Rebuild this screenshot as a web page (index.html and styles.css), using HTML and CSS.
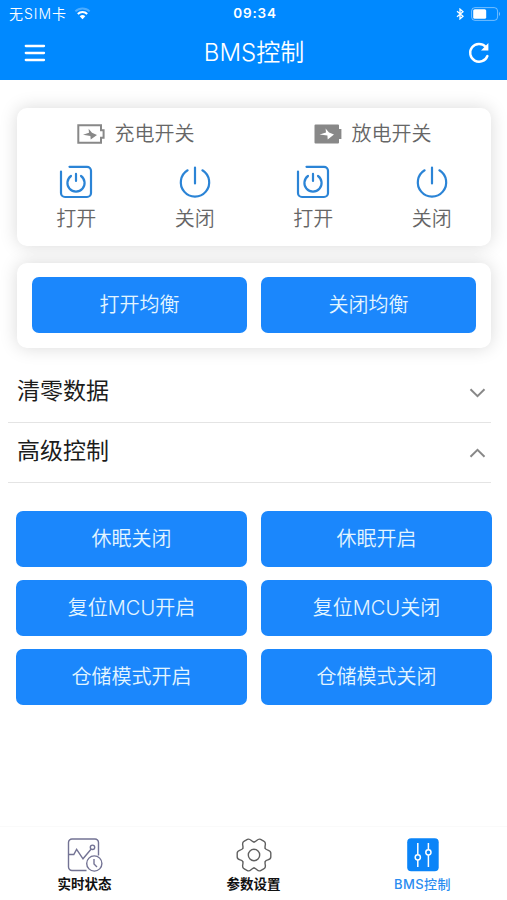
FILE: index.html
```html
<!DOCTYPE html>
<html lang="zh-CN">
  <head>
    <meta charset="UTF-8" />
    <meta name="viewport" content="width=device-width, initial-scale=1.0" />
    <title>BMS控制</title>
    <link rel="stylesheet" href="styles.css">
  </head>
  <body>
    <!-- shared icons -->
    <svg class="sprite">
      <symbol id="icon-open" viewBox="0 0 34 34">
        <path d="M10.5 1.800H28a4 4 0 0 1 4 4V28a4 4 0 0 1-4 4H6a4 4 0 0 1-4-4V6.500M12 11a8.600 8.600 0 1 0 10 0M17 8.800v7.200" />
      </symbol>
      <symbol id="icon-close" viewBox="0 0 34 34">
        <path d="M9.6 5.3a14.2 14.2 0 1 0 14.8 0M17 2.5v16" />
      </symbol>
      <symbol id="gear-tooth" viewBox="0 0 36 34">
        <path d="M29.3 10.500C30.500 12.600 34.800 11.600 34.800 15V19C34.800 22.400 30.500 21.400 29.300 23.500" />
      </symbol>
    </svg>

    <header class="header">
      <div class="status">
        <div class="status-left">
          <span>无SIM卡</span>
          <svg width="17" height="13" viewBox="0 0 17 13" fill="none" stroke="#fff" stroke-width="2">
            <path d="M1.4 4.4a10 10 0 0 1 14.2 0" opacity=".3" />
            <path d="M3.8 7a6.7 6.7 0 0 1 9.4 0" />
            <path d="M5.7 9.3a4 4 0 0 1 5.6 0L8.5 12.3z" fill="#fff" stroke="none" />
          </svg>
        </div>
        <span class="time">09:34</span>
        <div class="status-right">
          <svg width="8" height="12" viewBox="0 0 8 12" fill="none" stroke="#fff" stroke-width="1.3">
            <path d="M1 3.3l6 5-3 2.6V1.1l3 2.6-6 5" />
          </svg>
          <svg width="30" height="14" viewBox="0 0 30 14">
            <rect x=".6" y=".6" width="26" height="12.8" rx="3.4" fill="none" stroke="#fff" stroke-opacity=".45" />
            <rect x="2.2" y="2.2" width="13" height="9.6" rx="1.6" fill="#fff" />
            <path d="M28 4.8q2 2.2 0 4.4z" fill="#fff" opacity=".5" />
          </svg>
        </div>
      </div>
      <div class="navbar">
        <svg width="22" height="18" viewBox="0 0 22 18" stroke="#fff" stroke-width="2.3" stroke-linecap="round">
          <path d="M1.8 2H20M1.8 9H20M1.8 16H20" />
        </svg>
        <h1>BMS控制</h1>
        <svg width="22" height="22" viewBox="0 0 22 22" fill="none" stroke="#fff" stroke-width="2.4">
          <path d="M17.600 4.800A8.900 8.900 0 1 0 19.400 14" stroke-linecap="round" />
          <path d="M20.4 1v7.6H13z" fill="#fff" stroke="none" />
        </svg>
      </div>
    </header>

    <main class="main">
      <section class="card switches">
        <div class="switch">
          <h2>
            <svg width="28" height="20" viewBox="0 0 28 20">
              <path d="M1.3 1.3H24V6.300h2.600v7.400H24v5H1.3z" fill="none" stroke="#888" stroke-width="2" />
              <path d="M11.600 4.800l3.400 4 5 2.200-6.300 4.400-.300-3.400-7.400-1.200 6-2z" fill="#888" />
            </svg>
            充电开关
          </h2>
          <div class="actions">
            <button class="action"><svg><use href="#icon-open" /></svg>打开</button>
            <button class="action"><svg><use href="#icon-close" /></svg>关闭</button>
          </div>
        </div>
        <div class="switch">
          <h2>
            <svg width="28" height="20" viewBox="0 0 28 20">
              <path d="M.5 1.4q0-1 1-1H24q1 0 1 1V5h2.4v10H25v3.6q0 1-1 1H1.500q-1 0-1-1z" fill="#888" />
              <path d="M11.600 4.400l3.400 4 5 2.200-6.300 4.800-.300-3.800-7.800-1.200 6.400-2z" fill="#fff" />
            </svg>
            放电开关
          </h2>
          <div class="actions">
            <button class="action"><svg><use href="#icon-open" /></svg>打开</button>
            <button class="action"><svg><use href="#icon-close" /></svg>关闭</button>
          </div>
        </div>
      </section>

      <section class="card balance">
        <button class="btn">打开均衡</button>
        <button class="btn">关闭均衡</button>
      </section>

      <div class="collapse">
        <span>清零数据</span>
        <svg width="17" height="10" viewBox="0 0 17 10"><path d="M1.500 1.2l7 7 7-7" /></svg>
      </div>
      <div class="collapse">
        <span>高级控制</span>
        <svg width="17" height="10" viewBox="0 0 17 10"><path d="M1.500 8.800l7-7 7 7" /></svg>
      </div>

      <div class="advanced">
        <button class="btn">休眠关闭</button>
        <button class="btn">休眠开启</button>
        <button class="btn">复位MCU开启</button>
        <button class="btn">复位MCU关闭</button>
        <button class="btn">仓储模式开启</button>
        <button class="btn">仓储模式关闭</button>
      </div>
    </main>

    <nav class="tabbar">
      <a class="tab">
        <svg width="36" height="34" viewBox="0 0 36 34" fill="none" stroke="#737394" stroke-width="1.4">
          <path d="M19.500 32.500H5a3.500 3.500 0 0 1-3.500-3.500V4.500A3.500 3.500 0 0 1 5 1H28A3.500 3.500 0 0 1 31.500 4.500V17.500" />
          <path d="M1.500 16.500H6.800L9.600 11.300 16 20.800 24 11.200" />
          <circle cx="25.500" cy="9.300" r="2.200" />
          <circle cx="27.300" cy="25.500" r="7.600" />
          <path d="M27 21v5l3 3" />
        </svg>
        实时状态
      </a>
      <a class="tab">
        <svg width="36" height="34" viewBox="0 0 36 34" fill="none" stroke="#606060" stroke-width="1.4" stroke-linecap="round">
          <use href="#gear-tooth" width="36" height="34" />
          <use href="#gear-tooth" width="36" height="34" transform="rotate(60 18 17)" />
          <use href="#gear-tooth" width="36" height="34" transform="rotate(120 18 17)" />
          <use href="#gear-tooth" width="36" height="34" transform="rotate(180 18 17)" />
          <use href="#gear-tooth" width="36" height="34" transform="rotate(240 18 17)" />
          <use href="#gear-tooth" width="36" height="34" transform="rotate(300 18 17)" />
          <circle cx="18" cy="17" r="5.700" />
        </svg>
        参数设置
      </a>
      <a class="tab active">
        <svg width="36" height="34" viewBox="0 0 36 34" fill="none" stroke="#fff" stroke-width="1.500">
          <rect x="2.200" y=".300" width="31.500" height="33" rx="4" fill="#0a84f8" stroke="none" />
          <path d="M12.800 5V16.500M12.800 22V29M23.400 5V11.500M23.400 17V29" />
          <circle cx="12.800" cy="19.300" r="2.600" />
          <circle cx="23.400" cy="14.300" r="2.600" />
        </svg>
        BMS控制
      </a>
    </nav>
  </body>
</html>
```

FILE: styles.css
```css
* {
  margin: 0;
  padding: 0;
  box-sizing: border-box;
}

body {
  font-family: Inter, "Noto Sans CJK SC", sans-serif;
  background-color: #fff;
  height: 100vh;
  display: flex;
  flex-direction: column;
  overflow: hidden;
}

svg {
  display: block;
  flex: none;
}

button {
  border: none;
  background: none;
  font-family: inherit;
  cursor: pointer;
}

.sprite {
  width: 0;
  height: 0;
}

.header {
  height: 80px;
  background-color: #0089ff;
  color: #fff;
}

.status {
  height: 27px;
  padding: 0 6px 0 9px;
  display: grid;
  grid-template-columns: 1fr auto 1fr;
  align-items: center;
  font-size: 14px;
  line-height: 27px;
}

.status-left,
.status-right {
  display: flex;
  align-items: center;
  gap: 7px;
}

.status-left {
  font-weight: 350;
  letter-spacing: 1px;
}

.status-right {
  justify-content: flex-end;
}

.time {
  font-size: 13.5px;
  font-weight: 600;
  letter-spacing: 0.8px;
}

.navbar {
  height: 52px;
  padding: 0 17px 0 24px;
  display: grid;
  grid-template-columns: 22px 1fr 22px;
  align-items: center;
}

.navbar h1 {
  padding-right: 6px;
  font-size: 24px;
  font-weight: 350;
  line-height: 52px;
  text-align: center;
}

.main {
  flex: 1;
  padding-top: 28px;
}

.card {
  margin: 0 16px 17px 17px;
  background-color: #fff;
  border-radius: 10px;
  box-shadow: 0 0 18px rgba(0, 0, 0, 0.15);
}

.switches {
  height: 138px;
  display: flex;
}

.switch {
  flex: 1;
  padding-top: 11px;
}

.switch h2 {
  display: flex;
  align-items: center;
  justify-content: center;
  gap: 10px;
  font-size: 20px;
  font-weight: 350;
  line-height: 30px;
  color: #666;
}

.actions {
  display: flex;
  margin-top: 16px;
}

.action {
  flex: 1;
  display: flex;
  flex-direction: column;
  align-items: center;
  gap: 6px;
  font-size: 20px;
  font-weight: 350;
  line-height: 28px;
  color: #666;
}

.action svg {
  width: 34px;
  height: 34px;
  fill: none;
  stroke: #2b84d6;
  stroke-width: 2.2;
  stroke-linecap: round;
}

.balance {
  height: 85px;
  padding: 14px 15px 15px;
  display: flex;
  gap: 14px;
  margin-bottom: 15px;
}

.btn {
  flex: 1;
  height: 56px;
  padding-bottom: 4px;
  border-radius: 7px;
  background-color: #1b87fc;
  color: #e3f5ff;
  font-size: 20px;
  font-weight: 350;
}

.collapse {
  height: 60px;
  margin: 0 16px 0 8px;
  padding: 0 5px 0 9px;
  display: flex;
  align-items: center;
  justify-content: space-between;
  border-bottom: 1px solid #e4e4e4;
  font-size: 23px;
  line-height: 57px;
  color: #1c1c1c;
}

.collapse span {
  padding-bottom: 2px;
}

.collapse svg {
  fill: none;
  stroke: #888;
  stroke-width: 2;
}

.advanced {
  margin: 28px 15px 0 16px;
  display: grid;
  grid-template-columns: 1fr 1fr;
  gap: 13px 14px;
}

.tabbar {
  height: 74px;
  padding-top: 11px;
  display: flex;
  border-top: 1px solid #fafafa;
}

.tab {
  flex: 1;
  display: flex;
  flex-direction: column;
  align-items: center;
  gap: 2px;
  font-size: 13.5px;
  font-weight: 700;
  line-height: 20px;
  color: #111;
}

.tab.active {
  color: #2a8cf0;
  font-size: 13px;
  font-weight: 500;
  letter-spacing: 0.4px;
}
```
